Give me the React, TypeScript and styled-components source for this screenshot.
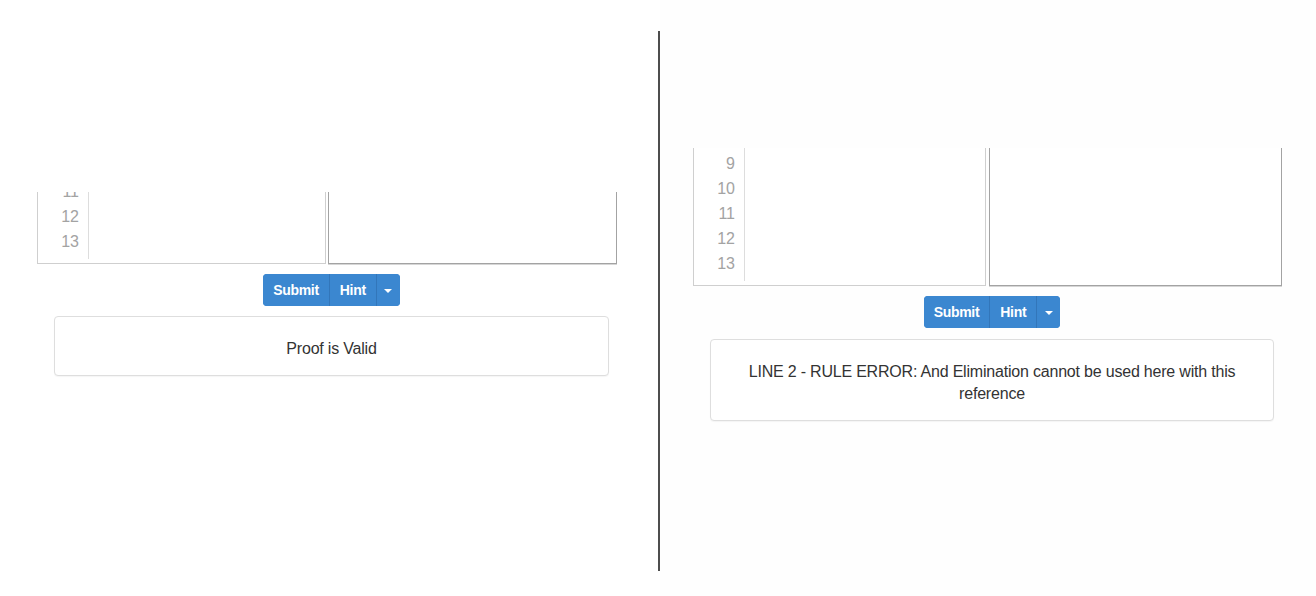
import React from "react";
import styled, { createGlobalStyle } from "styled-components";

const Global = createGlobalStyle`
  html, body { margin: 0; padding: 0; background: #ffffff; }
  body { font-family: "Liberation Sans", Arial, Helvetica, sans-serif; }
`;

const Page = styled.div`
  display: flex;
  flex-direction: row;
  width: 1316px;
  height: 596px;
  overflow: hidden;
  background: #ffffff;
`;

const Half = styled.section<{ $w: number; $top: number; $left: number; $bg?: string }>`
  width: ${(p) => p.$w}px;
  flex: none;
  box-sizing: border-box;
  padding-top: ${(p) => p.$top}px;
  padding-left: ${(p) => p.$left}px;
  display: flex;
  flex-direction: column;
  align-items: flex-start;
  background: ${(p) => p.$bg || "#ffffff"};
`;

const Divider = styled.div`
  width: 2px;
  flex: none;
  margin-top: 31px;
  height: 540px;
  background: #4d4d4d;
`;

const EditorRow = styled.div<{ $w: number; $h: number; $gap: number }>`
  display: flex;
  gap: ${(p) => p.$gap}px;
  width: ${(p) => p.$w}px;
  height: ${(p) => p.$h}px;
`;

const CodePane = styled.div`
  flex: 1;
  box-sizing: border-box;
  display: flex;
  border: 1px solid #cfcfcf;
  border-top: none;
  padding-bottom: 4px;
  background: #ffffff;
`;

const Gutter = styled.div`
  width: 51px;
  flex: none;
  box-sizing: border-box;
  border-right: 1px solid #dddddd;
  padding: 0 9px 5px 0;
  display: flex;
  flex-direction: column;
  justify-content: flex-end;
  overflow: hidden;
`;

const LineNo = styled.div`
  flex: none;
  height: 25px;
  line-height: 25px;
  text-align: right;
  font-size: 16px;
  color: #a3a3a3;
`;

const TextPane = styled.div`
  flex: 1;
  box-sizing: border-box;
  border: 1px solid #a3a3a3;
  border-top: none;
  box-shadow: 0 1px 0 #d6d6d6;
  background: #ffffff;
`;

const Footer = styled.div<{ $w: number; $offset: number }>`
  width: ${(p) => p.$w}px;
  margin-left: ${(p) => p.$offset}px;
  display: flex;
  flex-direction: column;
  align-items: center;
`;

const ButtonGroup = styled.div`
  display: flex;
  margin-top: 10px;
  height: 32px;
  border-radius: 4px;
  overflow: hidden;
  background: #3b87d0;
`;

const Btn = styled.button<{ $first?: boolean }>`
  height: 32px;
  box-sizing: border-box;
  border: none;
  border-left: ${(p) => (p.$first ? "none" : "1px solid #3276ba")};
  background: #3b87d0;
  color: #ffffff;
  font-family: "Liberation Sans", Arial, Helvetica, sans-serif;
  font-weight: bold;
  font-size: 14px;
  letter-spacing: -0.3px;
  padding: 0 10px;
  display: flex;
  align-items: center;
  justify-content: center;
  cursor: pointer;
`;

const CaretBtn = styled(Btn)`
  width: 24px;
  padding: 0;
`;

const Caret = styled.span`
  width: 0;
  height: 0;
  border-top: 4px solid #ffffff;
  border-left: 4px solid transparent;
  border-right: 4px solid transparent;
  margin-top: 1px;
`;

const Result = styled.div<{ $mt: number }>`
  width: 100%;
  box-sizing: border-box;
  margin-top: ${(p) => p.$mt}px;
  padding: 21px 15px 15px;
  border: 1px solid #dedede;
  border-radius: 4px;
  box-shadow: 0 1px 1px rgba(0, 0, 0, 0.04);
  background: #ffffff;
  text-align: center;
  font-size: 16px;
  letter-spacing: -0.2px;
  line-height: 22px;
  color: #333333;
`;

type PanelProps = {
  firstLine: number;
  editorW: number;
  editorH: number;
  gap: number;
  footerW: number;
  resultMt: number;
  message: string;
};

function Panel({ firstLine, editorW, editorH, gap, footerW, resultMt, message }: PanelProps) {
  const lines = Array.from({ length: 14 - firstLine }, (_, i) => firstLine + i);
  return (
    <>
      <EditorRow $w={editorW} $h={editorH} $gap={gap}>
        <CodePane>
          <Gutter>
            {lines.map((n) => (
              <LineNo key={n}>{n}</LineNo>
            ))}
          </Gutter>
        </CodePane>
        <TextPane />
      </EditorRow>
      <Footer $w={footerW} $offset={17}>
        <ButtonGroup>
          <Btn $first>Submit</Btn>
          <Btn>Hint</Btn>
          <CaretBtn>
            <Caret />
          </CaretBtn>
        </ButtonGroup>
        <Result $mt={resultMt}>{message}</Result>
      </Footer>
    </>
  );
}

export default function App() {
  return (
    <Page>
      <Global />
      <Half $w={658} $top={192} $left={37}>
        <Panel
          firstLine={11}
          editorW={580}
          editorH={72}
          gap={2}
          footerW={555}
          resultMt={10}
          message="Proof is Valid"
        />
      </Half>
      <Divider />
      <Half $w={656} $top={148} $left={33} $bg="#fefefe">
        <Panel
          firstLine={9}
          editorW={589}
          editorH={138}
          gap={3}
          footerW={564}
          resultMt={11}
          message="LINE 2 - RULE ERROR: And Elimination cannot be used here with this reference"
        />
      </Half>
    </Page>
  );
}
